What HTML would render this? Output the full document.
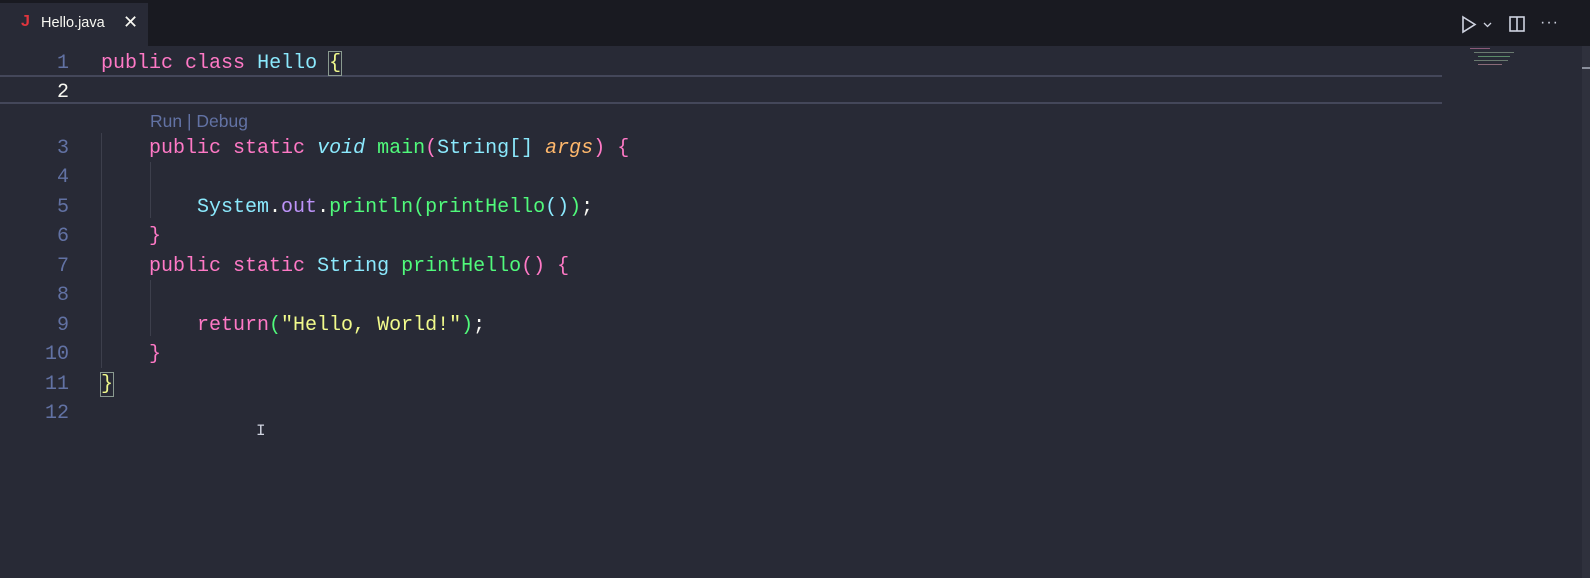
<!DOCTYPE html>
<html><head><style>
body{margin:0;width:1590px;height:578px;background:#282a36;overflow:hidden;font-family:"Liberation Sans",sans-serif;position:relative}
.tabbar{position:absolute;left:0;top:0;width:1590px;height:46px;background:#191a21}
.tab{position:absolute;left:0;top:3px;width:148px;height:43px;background:#282a36;color:#f8f8f2;font-size:14.5px}
.code{position:absolute;left:0;top:49px;font-family:"Liberation Mono",monospace;font-size:20px;white-space:pre}
.ln{position:absolute;width:69px;text-align:right;color:#6272a4}
.l{position:absolute;left:101px;color:#f8f8f2}
.p{color:#ff79c6}.c{color:#8be9fd}.g{color:#50fa7b}.o{color:#ffb86c;font-style:italic}.v{color:#8be9fd;font-style:italic}.pu{color:#bd93f9}.y{color:#f1fa8c}
.guide{position:absolute;width:1px;background:#3d3f4c}
.mm{position:absolute;height:1px}
</style></head><body>
<div class="tabbar">
<div class="tab"><span style="position:absolute;left:21px;top:10px;color:#e0353d;font-weight:bold;font-size:16px">J</span><span style="position:absolute;left:41px;top:12px">Hello.java</span><span style="position:absolute;left:123px;top:9px;font-size:18px">✕</span></div>
<svg style="position:absolute;left:1460px;top:15px" width="40" height="20"><path d="M3 2 L15 9.5 L3 17 Z" fill="none" stroke="#cfd3e0" stroke-width="1.6"/><path d="M24 8 L27.5 11.5 L31 8" fill="none" stroke="#cfd3e0" stroke-width="1.3"/></svg>
<svg style="position:absolute;left:1508px;top:15px" width="20" height="20"><rect x="2" y="2" width="14" height="14" fill="none" stroke="#cfd3e0" stroke-width="1.6"/><line x1="9" y1="2" x2="9" y2="16" stroke="#cfd3e0" stroke-width="1.6"/></svg>
<div style="position:absolute;left:1540px;top:14px;color:#cfd3e0;font-size:16px;letter-spacing:1px">···</div>
</div>
<div style="position:absolute;left:0;top:75px;width:1442px;height:29px;border-top:2px solid #44475a;border-bottom:2px solid #44475a;box-sizing:border-box"></div>
<div class="mm" style="left:1470px;top:48px;width:20px;background:#8a5a78"></div>
<div class="mm" style="left:1474px;top:52px;width:40px;background:#6a7a70"></div>
<div class="mm" style="left:1478px;top:56px;width:32px;background:#5a8a68"></div>
<div class="mm" style="left:1474px;top:60px;width:34px;background:#6a7a70"></div>
<div class="mm" style="left:1478px;top:64px;width:24px;background:#8a6a78"></div>
<div style="position:absolute;left:1582px;top:46px;width:8px;height:532px;background:#2f313d"></div>
<div style="position:absolute;left:1582px;top:67px;width:8px;height:2px;background:#8a8f9c"></div>
<div class="guide" style="left:101px;top:133px;height:235px"></div>
<div class="guide" style="left:150px;top:162px;height:56px"></div>
<div class="guide" style="left:150px;top:280px;height:56px"></div>
<div class="code">
<div class="ln" style="top:3px">1</div><div class="l" style="top:3px"><span class="p">public</span> <span class="p">class</span> <span class="c">Hello</span> <span style="outline:1px solid #8a9a90;color:#f1fa8c">{</span></div>
<div class="ln" style="top:32px;color:#f8f8f2">2</div>
<div class="l" style="top:62px;left:150px;font-family:'Liberation Sans',sans-serif;font-size:17.5px;color:#6272a4">Run | Debug</div>
<div class="ln" style="top:88px">3</div><div class="l" style="top:88px">    <span class="p">public</span> <span class="p">static</span> <span class="v">void</span> <span class="g">main</span><span class="p">(</span><span class="c">String[]</span> <span class="o">args</span><span class="p">)</span> <span class="p">{</span></div>
<div class="ln" style="top:117px">4</div>
<div class="ln" style="top:147px">5</div><div class="l" style="top:147px">        <span class="c">System</span>.<span class="pu">out</span>.<span class="g">println(</span><span class="g">printHello</span><span class="c">()</span><span class="g">)</span>;</div>
<div class="ln" style="top:176px">6</div><div class="l" style="top:176px">    <span class="p">}</span></div>
<div class="ln" style="top:206px">7</div><div class="l" style="top:206px">    <span class="p">public</span> <span class="p">static</span> <span class="c">String</span> <span class="g">printHello</span><span class="p">()</span> <span class="p">{</span></div>
<div class="ln" style="top:235px">8</div>
<div class="ln" style="top:265px">9</div><div class="l" style="top:265px">        <span class="p">return</span><span class="g">(</span><span class="y">"Hello, World!"</span><span class="g">)</span>;</div>
<div class="ln" style="top:294px">10</div><div class="l" style="top:294px">    <span class="p">}</span></div>
<div class="ln" style="top:324px">11</div><div class="l" style="top:324px"><span style="outline:1px solid #8a9a90;color:#f1fa8c">}</span></div>
<div class="ln" style="top:353px">12</div>
</div>
<div style="position:absolute;left:256px;top:422px;color:#cfd3e0;font-family:'Liberation Mono',monospace;font-size:16px">I</div>
</body></html>
